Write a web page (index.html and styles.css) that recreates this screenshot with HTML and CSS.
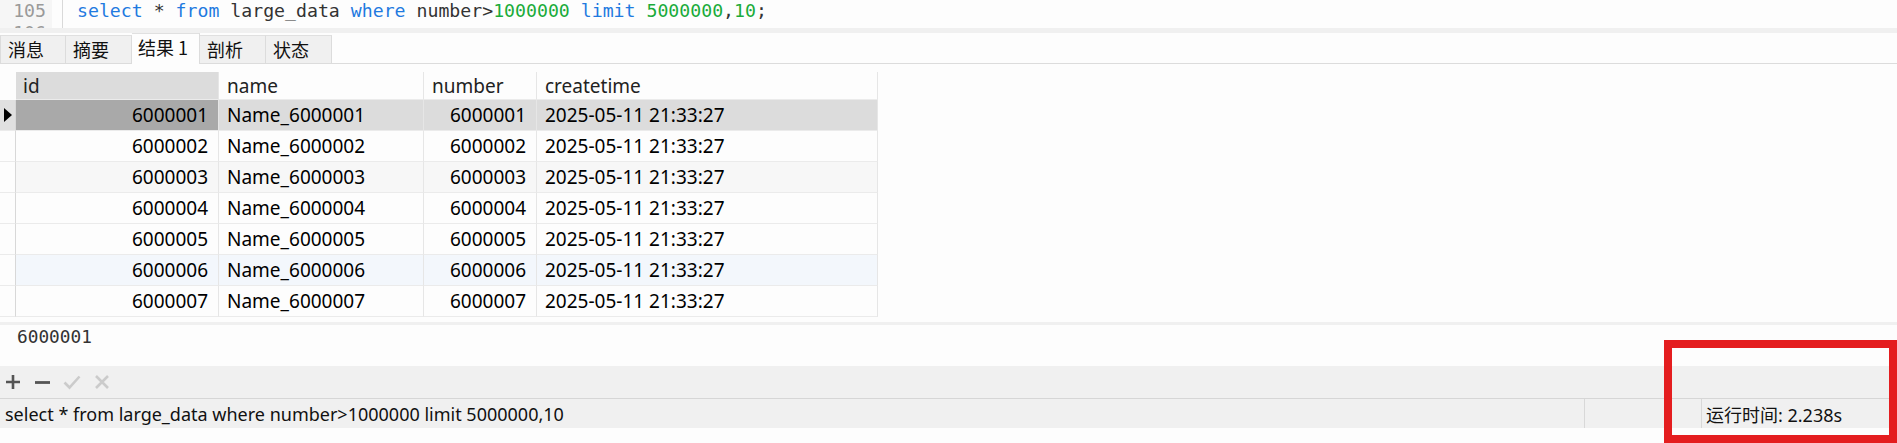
FILE: index.html
```html
<!DOCTYPE html>
<html>
<head>
<meta charset="utf-8">
<link rel="stylesheet" href="styles.css">
</head>
<body>
<div class="app">
  <div class="editor">
    <div class="gutter">
      <div class="ln">105</div>
      <div class="ln">106</div>
    </div>
    <div class="code">
      <div class="line"><span class="kw">select</span> * <span class="kw">from</span> large_data <span class="kw">where</span> number&gt;<span class="num">1000000</span> <span class="kw">limit</span> <span class="num">5000000</span>,<span class="num">10</span>;</div>
      <div class="line"></div>
    </div>
  </div>
  <div class="band"></div>
  <div class="tabs">
    <div class="tab first">消息</div>
    <div class="tab">摘要</div>
    <div class="tab active">结果 1</div>
    <div class="tab">剖析</div>
    <div class="tab">状态</div>
  </div>
  <div class="results">
    <div class="grid">
      <div class="row head">
        <div class="cell ind"></div>
        <div class="cell hsel">id</div>
        <div class="cell">name</div>
        <div class="cell">number</div>
        <div class="cell">createtime</div>
      </div>
      <div class="row sel">
        <div class="cell ind"><span class="arrow"></span></div>
        <div class="cell r idsel">6000001</div>
        <div class="cell">Name_6000001</div>
        <div class="cell r">6000001</div>
        <div class="cell">2025-05-11 21:33:27</div>
      </div>
      <div class="row">
        <div class="cell ind"></div>
        <div class="cell r">6000002</div>
        <div class="cell">Name_6000002</div>
        <div class="cell r">6000002</div>
        <div class="cell">2025-05-11 21:33:27</div>
      </div>
      <div class="row alt">
        <div class="cell ind"></div>
        <div class="cell r">6000003</div>
        <div class="cell">Name_6000003</div>
        <div class="cell r">6000003</div>
        <div class="cell">2025-05-11 21:33:27</div>
      </div>
      <div class="row">
        <div class="cell ind"></div>
        <div class="cell r">6000004</div>
        <div class="cell">Name_6000004</div>
        <div class="cell r">6000004</div>
        <div class="cell">2025-05-11 21:33:27</div>
      </div>
      <div class="row">
        <div class="cell ind"></div>
        <div class="cell r">6000005</div>
        <div class="cell">Name_6000005</div>
        <div class="cell r">6000005</div>
        <div class="cell">2025-05-11 21:33:27</div>
      </div>
      <div class="row hover">
        <div class="cell ind"></div>
        <div class="cell r">6000006</div>
        <div class="cell">Name_6000006</div>
        <div class="cell r">6000006</div>
        <div class="cell">2025-05-11 21:33:27</div>
      </div>
      <div class="row">
        <div class="cell ind"></div>
        <div class="cell r">6000007</div>
        <div class="cell">Name_6000007</div>
        <div class="cell r">6000007</div>
        <div class="cell">2025-05-11 21:33:27</div>
      </div>
    </div>
  </div>
  <div class="band2"></div>
  <div class="value">6000001</div>
  <div class="toolbar">
    <svg class="icon" width="16" height="16" viewBox="0 0 16 16"><path d="M8 1v14M1 8h14" stroke="#555" stroke-width="2.6" fill="none"/></svg>
    <svg class="icon" width="16" height="16" viewBox="0 0 16 16"><path d="M1 8.5h15" stroke="#555" stroke-width="2.8" fill="none"/></svg>
    <svg class="icon" width="18" height="16" viewBox="0 0 18 16"><path d="M1.5 8.5l5 5L16.5 2.5" stroke="#cbcbcb" stroke-width="2.6" fill="none"/></svg>
    <svg class="icon" width="16" height="16" viewBox="0 0 16 16"><path d="M2 2l12 12M14 2L2 14" stroke="#cbcbcb" stroke-width="2.6" fill="none"/></svg>
  </div>
  <div class="status">
    <div class="scell main">select * from large_data where number&gt;1000000 limit 5000000,10</div>
    <div class="scell mid"></div>
    <div class="scell time">运行时间: 2.238s</div>
  </div>
  <div class="foot"></div>
</div>
<div class="highlight"></div>
</body>
</html>
```

FILE: styles.css
```css
html, body {
  margin: 0;
  padding: 0;
  background: #fdfdfd;
}
body {
  width: 1897px;
  height: 443px;
  overflow: hidden;
  position: relative;
  font-family: "Noto Sans", "Noto Sans CJK SC", sans-serif;
  color: #111;
}
.app {
  display: flex;
  flex-direction: column;
  width: 1897px;
}

/* editor */
.editor {
  height: 28px;
  display: flex;
  overflow: hidden;
  background: #fdfdfd;
  font-family: "DejaVu Sans Mono", monospace;
  font-size: 18.2px;
  line-height: 22px;
}
.gutter {
  width: 52px;
  background: #f6f6f6;
  color: #9a9a9a;
  text-align: right;
  padding-right: 6px;
  box-sizing: border-box;
}
.code {
  margin-left: 10px;
  border-left: 1px solid #d9d9d9;
  padding-left: 14px;
  color: #333;
  flex: 1;
}
.line {
  height: 22px;
  white-space: pre;
}
.kw { color: #1f7ae0; }
.num { color: #1aab3a; }

.band {
  height: 5px;
  background: #f0f0f0;
}

/* tabs */
.tabs {
  height: 31px;
  box-sizing: border-box;
  border-bottom: 1px solid #dcdcdc;
  display: flex;
  align-items: flex-start;
  background: #fdfdfd;
  font-family: "Noto Sans CJK SC", sans-serif;
  font-size: 18px;
}
.tab {
  height: 28px;
  min-width: 66px;
  box-sizing: border-box;
  padding: 0 8px 0 7px;
  background: #f0f0f0;
  border-top: 1px solid #e0e0e0;
  border-right: 1px solid #dcdcdc;
  line-height: 27px;
  color: #111;
  margin-top: 2px;
  overflow: hidden;
}
.tab.first { border-left: 1px solid #dcdcdc; }
.tab.active {
  height: 31px;
  min-width: 68px;
  margin-top: 0;
  background: #fdfdfd;
  line-height: 27px;
  padding-right: 10px;
  padding-left: 6px;
}

/* results grid */
.results {
  height: 258px;
  box-sizing: border-box;
  padding-top: 8px;
  background: #fdfdfd;
}
.grid {
  width: 878px;
  font-size: 19px;
}
.row {
  display: grid;
  grid-template-columns: 16px 203px 205px 113px 341px;
  height: 31px;
  background: #fdfdfd;
}
.row.head { height: 28px; }
.row.alt { background: #f7f7f7; }
.row.hover { background: #f3f7fc; }
.row.sel { background: #dcdcdc; }
.cell {
  box-sizing: border-box;
  border-right: 1px solid #e6e6e6;
  border-bottom: 1px solid #ebebeb;
  padding: 0 8px;
  display: flex;
  align-items: center;
  white-space: nowrap;
  color: #000;
}
.cell.r {
  justify-content: flex-end;
  padding-right: 10px;
}
.cell.ind {
  padding: 0;
  border-right: 1px solid #d8d8d8;
  background: #fdfdfd;
}
.row.head .cell.ind {
  border-right: none;
  border-bottom: none;
}
.row.head .cell { color: #222; padding-left: 8px; }
.row.head .cell.hsel {
  background: #dcdcdc;
  padding-left: 7px;
}
.row.sel .cell.ind { background: #e0e0e0; }
.cell.idsel { background: #a9a9a9; }
.arrow {
  display: block;
  width: 0;
  height: 0;
  margin-left: 4px;
  border-top: 7px solid transparent;
  border-bottom: 7px solid transparent;
  border-left: 8px solid #000;
}

.band2 {
  height: 3px;
  background: #f0f0f0;
}
.value {
  height: 41px;
  box-sizing: border-box;
  padding: 1px 0 0 17px;
  font-family: "DejaVu Sans Mono", monospace;
  font-size: 17.8px;
  line-height: 22px;
  color: #333;
  background: #fdfdfd;
}

/* toolbar */
.toolbar {
  height: 32px;
  background: #f0f0f0;
  display: flex;
  align-items: center;
  gap: 13px;
  padding-left: 5px;
}
.icon { display: block; }

/* status bar */
.status {
  height: 30px;
  box-sizing: border-box;
  border-top: 1px solid #d6d6d6;
  background: #f0f0f0;
  display: flex;
  font-size: 18px;
  color: #111;
}
.scell {
  box-sizing: border-box;
  display: flex;
  align-items: center;
  white-space: nowrap;
}
.scell.main {
  flex: 1;
  padding-left: 5px;
  border-right: 1px solid #d8d8d8;
}
.scell.mid {
  width: 117px;
  border-right: 1px solid #d8d8d8;
}
.scell.time {
  width: 195px;
  padding-left: 4px;
  font-family: "Noto Sans", "Noto Sans CJK SC", sans-serif;
}
.foot {
  height: 15px;
  background: #fdfdfd;
}

.highlight {
  position: absolute;
  left: 1664px;
  top: 340px;
  width: 233px;
  height: 103px;
  box-sizing: border-box;
  border: 8px solid #e41d1f;
}
```
